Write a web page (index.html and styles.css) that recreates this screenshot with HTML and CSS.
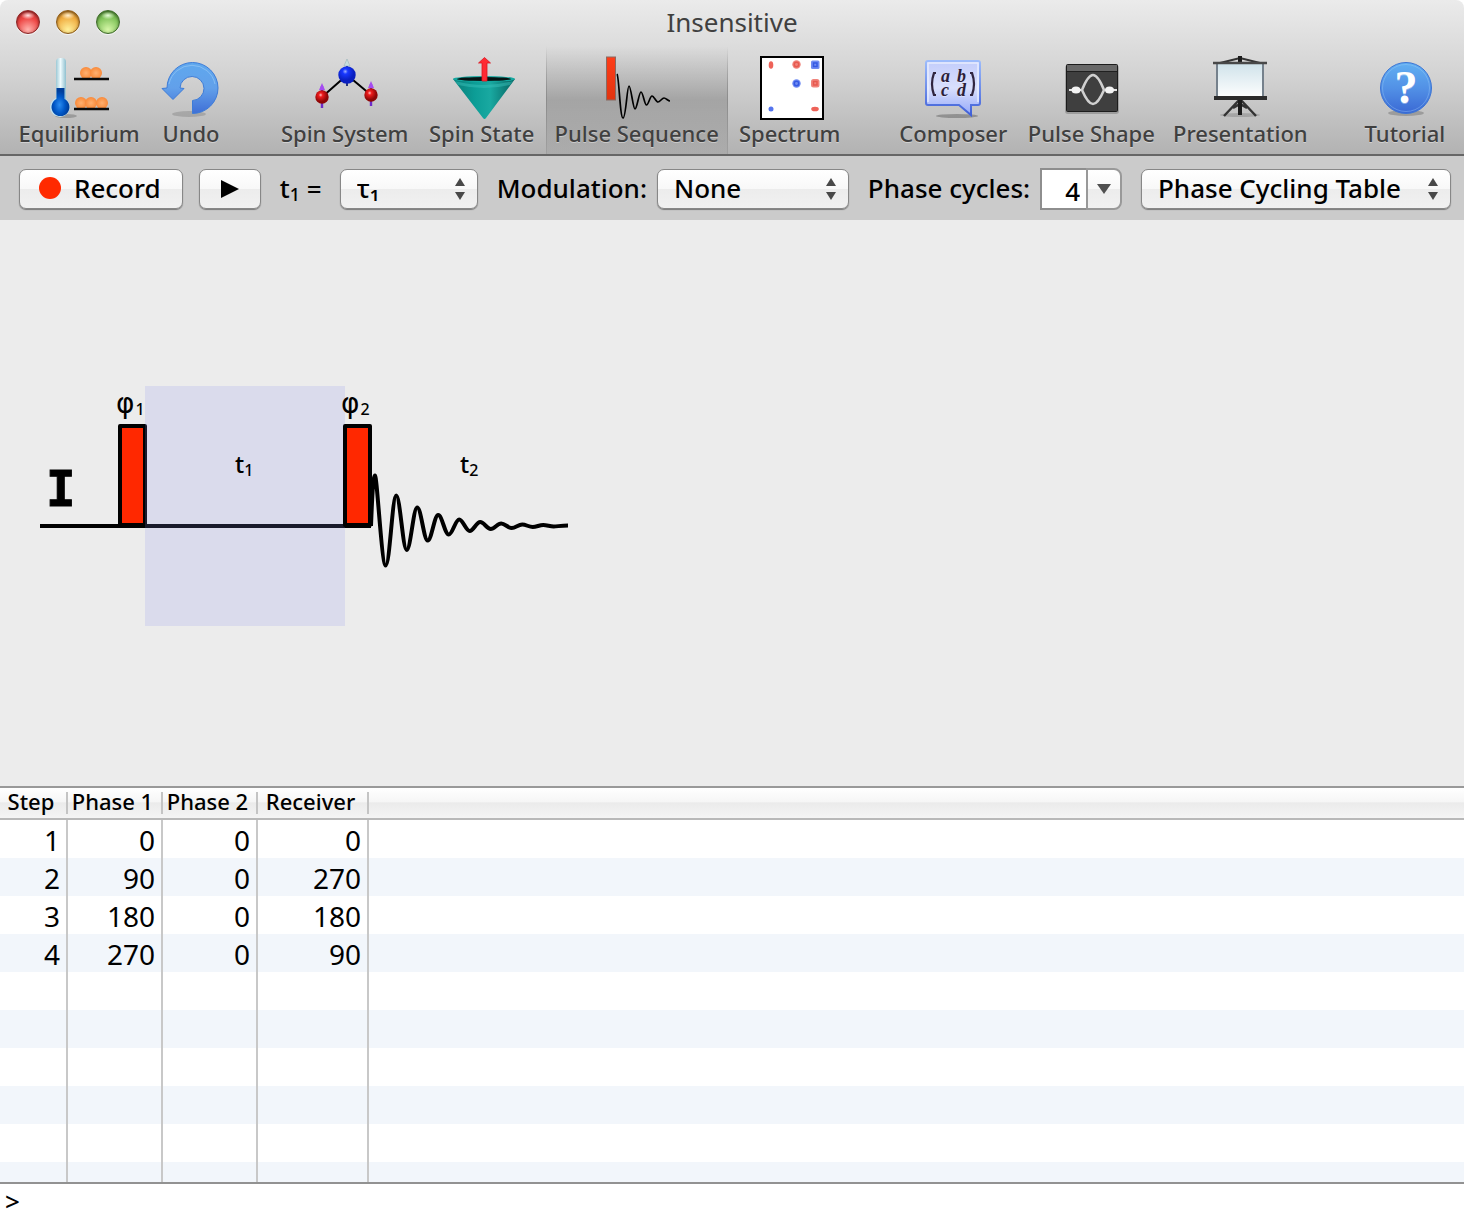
FILE: index.html
```html
<!DOCTYPE html>
<html lang="en">
<head>
<meta charset="utf-8">
<title>Insensitive</title>
<link rel="stylesheet" href="styles.css">
</head>
<body>
<div class="window">
  <header class="chrome">
    <div class="titlebar">
      <div class="lights">
        <button class="light light-close" aria-label="Close"></button>
        <button class="light light-min" aria-label="Minimize"></button>
        <button class="light light-zoom" aria-label="Zoom"></button>
      </div>
      <h1 class="title">Insensitive</h1>
    </div>
    <nav class="toolbar">
      <div class="group">
        <button class="tool tool-equilibrium">
          <svg class="icon" viewBox="0 0 64 64" aria-hidden="true">
            <defs>
              <radialGradient id="orange"><stop offset="0" stop-color="#ffb070"/><stop offset="1" stop-color="#f98a3a"/></radialGradient>
              <radialGradient id="bulb" cx=".45" cy=".6"><stop offset="0" stop-color="#2a8cf0"/><stop offset=".6" stop-color="#0058c8"/><stop offset="1" stop-color="#003f9c"/></radialGradient>
              <linearGradient id="tube"><stop offset="0" stop-color="#9cc9d6"/><stop offset=".45" stop-color="#eefafd"/><stop offset="1" stop-color="#8fc0cf"/></linearGradient>
            </defs>
            <ellipse cx="19" cy="60" rx="11" ry="2" fill="#000" opacity=".2"/>
            <circle cx="13" cy="51" r="10" fill="#bfe3f2"/>
            <rect x="9" y="2" width="10" height="46" rx="4" fill="url(#tube)"/>
            <path d="M9.500 32h8v11a9 9 0 1 1-8 0z" fill="url(#bulb)"/>
            <g fill="url(#orange)"><circle cx="39" cy="17" r="6"/><circle cx="49" cy="17" r="6"/><circle cx="34" cy="47" r="6"/><circle cx="44" cy="47" r="6"/><circle cx="55" cy="47" r="6"/></g>
            <path d="M27 23h35M27 53h35" stroke="#0a0a0a" stroke-width="2.4"/>
          </svg>
          <span>Equilibrium</span>
        </button>
        <button class="tool tool-undo">
          <svg class="icon" viewBox="0 0 64 64" aria-hidden="true">
            <defs><linearGradient id="undo" x2="0" y2="1"><stop offset="0" stop-color="#5fa8ee"/><stop offset=".5" stop-color="#62a0ea"/><stop offset="1" stop-color="#3f6fd6"/></linearGradient></defs>
            <ellipse cx="30" cy="58" rx="17" ry="3" fill="#000" opacity=".14"/>
            <path d="M33.500 57.500A25.500 25.500 0 1 0 8 32L3 32.500 14 43.500 25 32.500 21 32A12 12 0 1 1 33.500 44.500z" fill="url(#undo)" stroke="#3d7cd8"/>
            <path d="M10 28A23.500 23.500 0 0 1 56 28" fill="none" stroke="#9fcdf7" opacity=".6"/>
          </svg>
          <span>Undo</span>
        </button>
      </div>
      <div class="group">
        <button class="tool tool-system">
          <svg class="icon" viewBox="0 0 64 64" aria-hidden="true">
            <defs>
              <radialGradient id="blueball" cx=".4" cy=".3"><stop offset="0" stop-color="#9db0ff"/><stop offset=".3" stop-color="#1838ff"/><stop offset="1" stop-color="#0a1fc0"/></radialGradient>
              <radialGradient id="redball" cx=".4" cy=".35"><stop offset="0" stop-color="#ffc0c0"/><stop offset=".3" stop-color="#ee1c1c"/><stop offset="1" stop-color="#8e0606"/></radialGradient>
            </defs>
            <path d="M34 19L9 41M34 19L58 39" stroke="#000" stroke-width="2"/>
            <path d="M34 8v22" stroke="#26357a" stroke-width="2"/>
            <path d="M34 3l3 7h-6z" fill="#c7dede" stroke="#8faab0" stroke-width=".5"/>
            <path d="M9 30v22M58 28v22" stroke="#6d2cc8" stroke-width="2.4"/>
            <path d="M9 27l3 7H6zM58 25l3 7h-6z" fill="#a54cf0"/>
            <circle cx="34" cy="19" r="8.700" fill="url(#blueball)"/>
            <circle cx="9" cy="41" r="6.700" fill="url(#redball)"/>
            <circle cx="58" cy="39" r="6.700" fill="url(#redball)"/>
          </svg>
          <span>Spin System</span>
        </button>
        <button class="tool tool-state">
          <svg class="icon" viewBox="0 0 64 64" aria-hidden="true">
            <defs><linearGradient id="cone"><stop offset="0" stop-color="#0a7d78"/><stop offset=".35" stop-color="#0c9d96"/><stop offset=".6" stop-color="#19a9a1"/><stop offset="1" stop-color="#06625f"/></linearGradient></defs>
            <path d="M3 23L65 23 36 62Q34.500 64 33 62z" fill="url(#cone)"/>
            <path d="M5 25Q34 33 63 25L60 29Q34 35 8 29z" fill="#3cc4bc" opacity=".45"/>
            <ellipse cx="34" cy="23" rx="31" ry="3" fill="#14a8a0"/>
            <ellipse cx="34" cy="23" rx="27" ry="2" fill="#061414"/>
            <path d="M32 25V7H28.500L34.500 1.500 40.500 7H37v18z" fill="#ff2a33" stroke="#d91822" stroke-width=".8"/>
          </svg>
          <span>Spin State</span>
        </button>
        <button class="tool tool-sequence selected" aria-pressed="true">
          <svg class="icon" viewBox="0 0 64 64" aria-hidden="true">
            <defs><linearGradient id="bar" x2="0" y2="1"><stop offset="0" stop-color="#ff3d18"/><stop offset="1" stop-color="#e03410"/></linearGradient></defs>
            <rect x="1.500" y="1" width="9" height="43" fill="url(#bar)" stroke="#8a6a62"/>
            <path d="M12 18C14 20 15 62 18 62S22 30 24 30 28 53 30 53 34 36 36 36 39.500 49 41.500 49 45 40 47 40 51 46 53 46 57 42 59 42 63 45 65 45" fill="none" stroke="#000" stroke-width="1.700"/>
          </svg>
          <span>Pulse Sequence</span>
        </button>
        <button class="tool tool-spectrum">
          <svg class="icon" viewBox="0 0 64 64" aria-hidden="true">
            <rect x="3" y="1" width="62" height="62" fill="#fff" stroke="#000" stroke-width="2"/>
            <g fill="#f0837b"><circle cx="38.500" cy="8.500" r="4.200"/><rect x="53" y="23" width="8.500" height="8.500" rx="2.500"/></g>
            <g fill="#ee6258"><ellipse cx="13" cy="9" rx="2.300" ry="3.800"/><ellipse cx="57" cy="53" rx="3.800" ry="2.300"/></g>
            <g fill="#6f8bf2"><rect x="53" y="4.500" width="8.500" height="8.500" rx="1.500"/><circle cx="38.500" cy="27.500" r="4.200"/></g>
            <g fill="none" stroke-width="1.500"><circle cx="38.500" cy="8.500" r="2.200" stroke="#e7594f"/><rect x="55.500" y="25.500" width="3.500" height="3.500" stroke="#e7594f"/><rect x="55.500" y="7" width="3.500" height="3.500" stroke="#3559e2"/><circle cx="38.500" cy="27.500" r="2.200" stroke="#3559e2"/></g>
            <circle cx="13" cy="53" r="2.500" fill="#5474ee"/>
          </svg>
          <span>Spectrum</span>
        </button>
      </div>
      <div class="group">
        <button class="tool tool-composer">
          <svg class="icon" viewBox="0 0 64 64" aria-hidden="true">
            <defs>
              <linearGradient id="bubble" x2="0" y2="1"><stop offset="0" stop-color="#c3cdfb"/><stop offset=".5" stop-color="#d9dffc"/><stop offset="1" stop-color="#94a8fa"/></linearGradient>
              <linearGradient id="bubble-edge" x2="0" y2="1"><stop offset="0" stop-color="#9dbcfb"/><stop offset="1" stop-color="#3f5fd8"/></linearGradient>
            </defs>
            <ellipse cx="36" cy="60" rx="21" ry="2" fill="#000" opacity=".25"/>
            <path d="M7 5h50q2 0 2 2v40q0 2-2 2h-7v10L38 49H7q-2 0-2-2V7q0-2 2-2z" fill="url(#bubble)" stroke="url(#bubble-edge)" stroke-width="2"/>
            <path d="M7 46V7h50v39" fill="none" stroke="#eef2ff" stroke-width="1.500" opacity=".8"/>
            <path d="M15 17h-2q-4 11 0 22h2M49 17h2q4 11 0 22h-2" fill="none" stroke="#30253f" stroke-width="2.200"/>
            <g class="matrix"><text x="20" y="26">a</text><text x="36" y="26">b</text><text x="20" y="40">c</text><text x="36" y="40">d</text></g>
          </svg>
          <span>Composer</span>
        </button>
        <button class="tool tool-shape">
          <svg class="icon" viewBox="0 0 64 64" aria-hidden="true">
            <rect x="6" y="9" width="54" height="49" rx="3" fill="#000" opacity=".2"/>
            <rect x="7.500" y="8.500" width="51" height="47" rx="1" fill="#3f3f3f" stroke="#1c1c1c"/>
            <path d="M8 9h50v6H8z" fill="#686868"/><path d="M8 15.500h50" stroke="#202020"/>
            <path d="M10 34H24M44 34H58" stroke="#e4e4e4" stroke-width="2"/>
            <ellipse cx="17" cy="34" rx="4.500" ry="3.500" fill="#f2f2f2"/><ellipse cx="50.500" cy="34" rx="4.500" ry="3.500" fill="#f2f2f2"/>
            <path d="M23 34q6-15 11-15t11 15q-6 14-11 14T23 34z" fill="none" stroke="#d0d0d0" stroke-width="2.600"/>
          </svg>
          <span>Pulse Shape</span>
        </button>
        <button class="tool tool-presentation">
          <svg class="icon" viewBox="0 0 64 64" aria-hidden="true">
            <defs><linearGradient id="screen" x2="0" y2="1"><stop offset="0" stop-color="#cfe2ea"/><stop offset="1" stop-color="#fdfefe"/></linearGradient></defs>
            <ellipse cx="32" cy="59" rx="20" ry="2" fill="#000" opacity=".15"/>
            <path d="M32 43L16 60M32 43L48 60M25 52l7-4 7 4" fill="none" stroke="#333" stroke-width="2.400"/>
            <path d="M32 42v17" stroke="#1c1c1c" stroke-width="4"/>
            <path d="M12 7l20-5 20 5M32 0v8" fill="none" stroke="#333" stroke-width="2"/>
            <path d="M30 0h4v6h-4z" fill="#1c1c1c"/>
            <rect x="9" y="7" width="46" height="34" fill="url(#screen)" stroke="#75818c" stroke-width="2"/>
            <path d="M5 7h54" stroke="#484848" stroke-width="2.500"/>
            <path d="M6 42h53" stroke="#2b2b2b" stroke-width="4"/>
          </svg>
          <span>Presentation</span>
        </button>
      </div>
      <div class="group">
        <button class="tool tool-tutorial">
          <svg class="icon" viewBox="0 0 64 64" aria-hidden="true">
            <defs><linearGradient id="help" x2="0" y2="1"><stop offset="0" stop-color="#62b0f2"/><stop offset=".5" stop-color="#5291e6"/><stop offset="1" stop-color="#3a68d4"/></linearGradient></defs>
            <ellipse cx="33" cy="57" rx="18" ry="3" fill="#000" opacity=".2"/>
            <circle cx="33" cy="32" r="25.500" fill="url(#help)" stroke="#3c74d4"/>
            <circle cx="33" cy="32" r="23.500" fill="none" stroke="#9ccbf7" opacity=".4"/>
            <text class="mark" x="33" y="47" text-anchor="middle">?</text>
          </svg>
          <span>Tutorial</span>
        </button>
      </div>
    </nav>
  </header>

  <section class="controls" aria-label="Pulse sequence controls">
    <div class="buttons">
      <button class="push push-record"><span class="dot"></span>Record</button>
      <button class="push push-play" aria-label="Play"><svg width="18" height="18" viewBox="0 0 18 18" aria-hidden="true"><path d="M0 0L18 9 0 18z"/></svg></button>
    </div>
    <div class="field">
      <label for="t1">t<sub>1</sub> =</label>
      <span class="popup popup-t1"><select id="t1"><option>τ₁</option></select><svg class="arrows" viewBox="0 0 10 22" aria-hidden="true"><path d="M0 8L5 0l5 8zM0 14h10L5 22z"/></svg></span>
    </div>
    <div class="field">
      <label for="modulation">Modulation:</label>
      <span class="popup popup-modulation"><select id="modulation"><option>None</option></select><svg class="arrows" viewBox="0 0 10 22" aria-hidden="true"><path d="M0 8L5 0l5 8zM0 14h10L5 22z"/></svg></span>
    </div>
    <div class="field">
      <label for="cycles">Phase cycles:</label>
      <span class="combo"><input id="cycles" type="text" value="4"><button class="combo-arrow" aria-label="Choose phase cycles"><svg width="14" height="10" viewBox="0 0 14 10" aria-hidden="true"><path d="M0 0h14L7 10z"/></svg></button></span>
    </div>
    <span class="popup popup-table"><select aria-label="Lower pane"><option>Phase Cycling Table</option></select><svg class="arrows" viewBox="0 0 10 22" aria-hidden="true"><path d="M0 8L5 0l5 8zM0 14h10L5 22z"/></svg></span>
  </section>

  <main class="canvas">
    <svg class="diagram" width="530" height="246" viewBox="40 380 530 246" role="img" aria-label="Pulse sequence">
      <path d="M40 526H371" stroke="#000" stroke-width="4"/>
      <rect x="120" y="426" width="25" height="99" class="pulse"/>
      <rect x="145" y="386" width="200" height="240" fill="#8c91f0" opacity=".18"/>
      <rect x="345" y="426" width="25" height="99" class="pulse"/>
      <path class="fid" d="M371 526C372 500 373 475.500 375 475.500S381.700 565.500 385.700 565.500 392.400 495.500 396.200 495.500 402.900 550 406.700 550 413.400 507.500 417.200 507.500 423.900 540.500 427.700 540.500 434.400 515 438.200 515 444.900 534.500 448.700 534.500 455.400 519.500 459.200 519.500 465.900 531 469.700 531 476.400 522 480.200 522 486.900 529 490.700 529 497.400 523.500 501.200 523.500 507.900 528 511.700 528 518.400 524.500 522.200 524.500 528.900 527 532.700 527 539.400 525 543.200 525 549.900 526.500 553.700 526.500 560.400 525.500 568 525.500"/>
      <text class="nucleus" x="46" y="506">I</text>
      <text class="mark-label" x="116" y="413"><tspan class="phi">φ</tspan><tspan class="sub" dx="1" dy="2">1</tspan></text>
      <text class="mark-label" x="341" y="413"><tspan class="phi">φ</tspan><tspan class="sub" dx="1" dy="2">2</tspan></text>
      <text class="mark-label" x="235" y="473">t<tspan class="sub" dy="3">1</tspan></text>
      <text class="mark-label" x="460" y="473">t<tspan class="sub" dy="3">2</tspan></text>
    </svg>
  </main>

  <section class="phases">
    <table>
      <colgroup><col class="c-step"><col class="c-phase"><col class="c-phase"><col class="c-receiver"><col></colgroup>
      <thead><tr><th>Step</th><th>Phase 1</th><th>Phase 2</th><th>Receiver</th><th></th></tr></thead>
      <tbody>
        <tr><td>1</td><td>0</td><td>0</td><td>0</td><td></td></tr>
        <tr><td>2</td><td>90</td><td>0</td><td>270</td><td></td></tr>
        <tr><td>3</td><td>180</td><td>0</td><td>180</td><td></td></tr>
        <tr><td>4</td><td>270</td><td>0</td><td>90</td><td></td></tr>
        <tr><td></td><td></td><td></td><td></td><td></td></tr>
        <tr><td></td><td></td><td></td><td></td><td></td></tr>
        <tr><td></td><td></td><td></td><td></td><td></td></tr>
        <tr><td></td><td></td><td></td><td></td><td></td></tr>
        <tr><td></td><td></td><td></td><td></td><td></td></tr>
        <tr><td></td><td></td><td></td><td></td><td></td></tr>
      </tbody>
    </table>
  </section>

  <footer class="console"><label for="command">&gt;</label><input id="command" type="text"></footer>
</div>
</body>
</html>
```
FILE: styles.css
```css
* { box-sizing: border-box; }

body {
  margin: 0;
  background: #fff;
  color: #000;
  font-family: "Noto Sans", "Open Sans", sans-serif;
  font-size: 26px;
  font-weight: 500;
}

button, input, select { font: inherit; color: inherit; margin: 0; }

.window {
  display: grid;
  grid-template-rows: auto auto minmax(0, 566fr) minmax(0, 398fr) auto;
  height: 100vh;
}

/* title bar and toolbar */
.chrome {
  background: linear-gradient(#ebebeb, #d2d2d2 50%, #b2b2b2);
  border-bottom: 2px solid #666;
  border-radius: 8px 8px 0 0;
  color: #404040;
}

.titlebar {
  display: grid;
  grid-template-columns: 1fr auto 1fr;
  align-items: center;
  height: 46px;
  padding: 0 16px 2px;
}

.title { margin: 0; font-size: 26px; font-weight: 400; line-height: 32px; }

.lights { display: flex; gap: 16px; }

.light {
  width: 24px;
  height: 24px;
  padding: 0;
  border: 1px solid;
  border-radius: 50%;
  box-shadow: 0 1px 0 #f4f4f4, inset 0 1px 3px rgba(0, 0, 0, .5);
}

.light-close { background: radial-gradient(ellipse 7px 4px at 50% 20%, #ffe0e0, transparent), radial-gradient(circle at 50% 85%, #ffb3ae, #ee4745 55%, #c92e2e); border-color: #8b2323; }
.light-min { background: radial-gradient(ellipse 7px 4px at 50% 20%, #fff0cf, transparent), radial-gradient(circle at 50% 85%, #fff09a, #f0ac40 60%, #c98224); border-color: #8c5a17; }
.light-zoom { background: radial-gradient(ellipse 7px 4px at 50% 20%, #e6fbd8, transparent), radial-gradient(circle at 50% 85%, #d6f7a8, #7fc258 60%, #569c38); border-color: #3d6b28; }

.toolbar { display: flex; justify-content: space-between; padding: 0 9px 0 8px; }

.group { display: flex; gap: 2px; }
.group:first-child { margin-right: 2px; }

.tool {
  display: flex;
  flex-direction: column;
  align-items: center;
  padding: 10px 0 8px;
  border: 0;
  background: none;
  font-size: 22px;
  line-height: 26px;
  white-space: nowrap;
  text-shadow: 0 1px 0 rgba(255, 255, 255, .4);
}

.tool-equilibrium { width: 142px; }
.tool-undo { width: 78px; }
.tool-system { width: 146px; }
.tool-state { width: 124px; }
.tool-sequence { width: 182px; }
.tool-spectrum { width: 120px; }
.tool-composer { width: 128px; }
.tool-shape { width: 144px; }
.tool-presentation { width: 150px; }
.tool-tutorial { width: 100px; }

.selected {
  background:
    linear-gradient(transparent, #8c8c8c 50%, #a0a0a0) left / 1px 100% no-repeat,
    linear-gradient(transparent, #8c8c8c 50%, #a0a0a0) right / 1px 100% no-repeat,
    linear-gradient(rgba(0, 0, 0, 0), rgba(0, 0, 0, .18) 50%, rgba(0, 0, 0, .04));
}

.icon { display: block; width: 64px; height: 64px; overflow: visible; }

.matrix { font: italic 700 18px "Liberation Serif", serif; fill: #2c2038; }
.mark { font: 700 46px "Liberation Serif", serif; fill: #fff; }

/* sequence controls */
.controls {
  display: flex;
  justify-content: space-between;
  align-items: center;
  height: 64px;
  padding: 2px 13px 0 19px;
  background: #cbcbcb;
  line-height: 32px;
  white-space: nowrap;
}

.buttons { display: flex; gap: 16px; }
.field { display: flex; align-items: center; gap: 10px; }
.field label { min-width: 50px; padding-bottom: 2px; }
.field sub { font-size: 18px; line-height: 0; vertical-align: -3px; }

.push, .popup, .combo-arrow {
  border: 1px solid #878787;
  background: linear-gradient(#fff, #f8f8f8 50%, #ececec 50%, #f1f1f1);
}

.push, .popup { height: 40px; border-radius: 7px; box-shadow: 0 1px 1px rgba(0, 0, 0, .4); }

.push { display: flex; align-items: center; padding: 0 0 2px; }
.push-record { width: 164px; gap: 13px; padding-left: 19px; }
.push-play { width: 62px; justify-content: center; padding: 0; }

.dot { width: 22px; height: 22px; border-radius: 50%; background: #ff2a00; }

.popup { display: grid; align-items: center; }
.popup-t1 { width: 138px; }
.popup-modulation { width: 192px; }
.popup-table { width: 310px; }

.popup select {
  grid-area: 1 / 1;
  width: 100%;
  height: 38px;
  padding: 0 0 2px 16px;
  border: 0;
  background: none;
  appearance: none;
}

.arrows {
  grid-area: 1 / 1;
  justify-self: end;
  width: 10px;
  height: 22px;
  margin-right: 12px;
  fill: #484848;
  pointer-events: none;
}

.combo { display: flex; height: 42px; }

.combo input {
  width: 46px;
  padding: 4px 6px 0 0;
  border: 2px solid #8e8e8e;
  border-right: 0;
  background: #fff;
  text-align: right;
}

.combo-arrow {
  display: grid;
  place-items: center;
  width: 36px;
  padding: 0;
  border: 2px solid #999;
  border-radius: 0 8px 8px 0;
}

.combo-arrow svg { fill: #505050; }

/* pulse diagram */
.canvas {
  display: flex;
  align-items: center;
  padding-left: 40px;
  overflow: hidden;
  background: #ececec;
}

.diagram { flex: none; }
.pulse { fill: #ff2800; stroke: #000; stroke-width: 4; stroke-linejoin: round; }
.fid { fill: none; stroke: #000; stroke-width: 4; }
.nucleus { font: 700 49px "DejaVu Sans Mono", monospace; stroke: #000; stroke-width: 1; }
.mark-label { font-size: 24px; }
.phi { font-family: "DejaVu Sans", sans-serif; font-size: 28px; font-weight: 400; }
.sub { font-size: 16px; }

/* phase cycling table */
.phases { overflow: hidden; border-top: 2px solid #999; border-bottom: 2px solid #929292; background: #fff; }

table { width: 100%; border-collapse: separate; border-spacing: 0; table-layout: fixed; }

.c-step { width: 68px; }
.c-phase { width: 95px; }
.c-receiver { width: 111px; }

th {
  height: 32px;
  padding: 0 6px 4px 0;
  border-bottom: 2px solid #b8b8b8;
  background:
    linear-gradient(#c4c4c4, #c4c4c4) right 4px / 2px 22px no-repeat,
    linear-gradient(#fff, #f6f6f6 45%, #ebebeb 50%, #f4f4f4);
  font-size: 22px;
  font-weight: 500;
  line-height: 26px;
  white-space: nowrap;
}

td {
  height: 38px;
  padding: 2px 6px 0 0;
  border-right: 2px solid #c8c8c8;
  font-size: 28px;
  font-weight: 400;
  line-height: 34px;
  text-align: right;
}

th:last-child { background: linear-gradient(#fff, #f6f6f6 45%, #ebebeb 50%, #f4f4f4); }
td:last-child { border-right: 0; }
tbody tr:nth-child(even) { background: #f2f6fb; }

/* command line */
.console { display: flex; height: 34px; padding-left: 5px; background: #fff; line-height: 34px; }
.console input { flex: 1; min-width: 0; border: 0; outline: 0; padding: 0 8px; background: none; }
```
